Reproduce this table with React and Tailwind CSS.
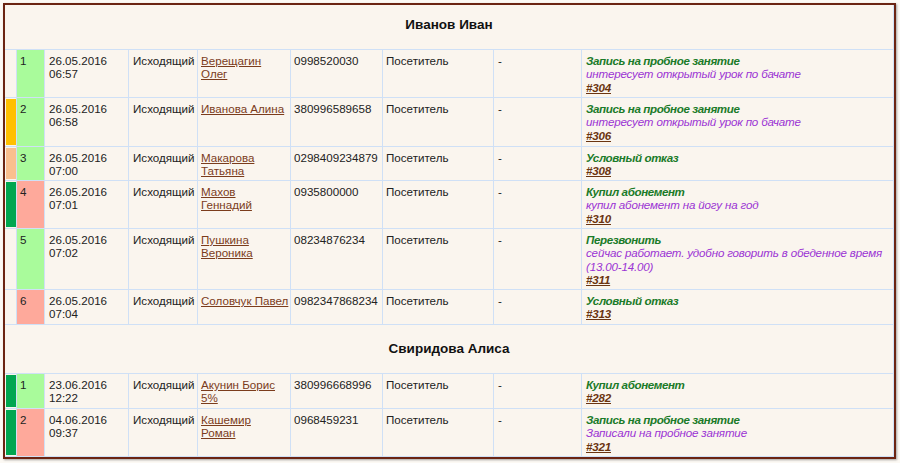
import React from "react";

const G = "bg-[#a9fb9b]";
const R = "bg-[#fea99b]";

const group1 = [
  { n: 1, numBg: G, stripe: "", date: "26.05.2016", time: "06:57", name: ["Верещагин", "Олег"], phone: "0998520030", title: "Запись на пробное занятие", comment: ["интересует открытый урок по бачате"], id: "#304", h: "h-[48px]" },
  { n: 2, numBg: G, stripe: "bg-[#ffc000]", date: "26.05.2016", time: "06:58", name: ["Иванова Алина"], phone: "380996589658", title: "Запись на пробное занятие", comment: ["интересует открытый урок по бачате"], id: "#306", h: "h-[49px]" },
  { n: 3, numBg: G, stripe: "bg-[#f9bf8e]", date: "26.05.2016", time: "07:00", name: ["Макарова", "Татьяна"], phone: "0298409234879", title: "Условный отказ", comment: [], id: "#308", h: "h-[34px]" },
  { n: 4, numBg: R, stripe: "bg-[#00a650]", date: "26.05.2016", time: "07:01", name: ["Махов", "Геннадий"], phone: "0935800000", title: "Купил абонемент", comment: ["купил абонемент на йогу на год"], id: "#310", h: "h-[48px]" },
  { n: 5, numBg: G, stripe: "", date: "26.05.2016", time: "07:02", name: ["Пушкина", "Вероника"], phone: "08234876234", title: "Перезвонить", comment: ["сейчас работает. удобно говорить в обеденное время", "(13.00-14.00)"], id: "#311", h: "h-[61px]" },
  { n: 6, numBg: R, stripe: "", date: "26.05.2016", time: "07:04", name: ["Соловчук Павел"], phone: "0982347868234", title: "Условный отказ", comment: [], id: "#313", h: "h-[35px]" },
];

const group2 = [
  { n: 1, numBg: G, stripe: "bg-[#00a650]", date: "23.06.2016", time: "12:22", name: ["Акунин Борис", "5%"], phone: "380996668996", title: "Купил абонемент", comment: [], id: "#282", h: "h-[35px]" },
  { n: 2, numBg: R, stripe: "bg-[#00a650]", date: "04.06.2016", time: "09:37", name: ["Кашемир", "Роман"], phone: "0968459231", title: "Запись на пробное занятие", comment: ["Записали на пробное занятие"], id: "#321", h: "h-[48px]" },
];

function Row({ r }) {
  return (
    <div className={`grid grid-cols-[11px_28px_84px_69px_93px_92px_111px_88px_312px] border-t border-[#cfe0f6] ${r.h}`}>
      <div className="pl-[1px] py-[1px]">
        <div className={`h-full w-full ${r.stripe}`} />
      </div>
      <div className={`border-l border-[#cfe0f6] pl-[3px] pt-[4px] ${r.numBg}`}>{r.n}</div>
      <div className="border-l border-[#cfe0f6] pl-[4px] pt-[4px]">
        <div>{r.date}</div>
        <div>{r.time}</div>
      </div>
      <div className="border-l border-[#cfe0f6] pl-[4px] pt-[4px]">Исходящий</div>
      <div className="border-l border-[#cfe0f6] pl-[3px] pt-[4px]">
        <a className="text-[#7b3c1c] underline decoration-[#7b3c1c]">
          {r.name.map((l, i) => (
            <React.Fragment key={i}>
              {i > 0 && <br />}
              {l}
            </React.Fragment>
          ))}
        </a>
      </div>
      <div className="border-l border-[#cfe0f6] pl-[3px] pt-[4px]">{r.phone}</div>
      <div className="border-l border-[#cfe0f6] pl-[3px] pt-[4px]">Посетитель</div>
      <div className="border-l border-[#cfe0f6] pl-[4px] pt-[4px]">-</div>
      <div className="border-l border-[#cfe0f6] pl-[4px] pt-[4px] italic">
        <div className="font-bold tracking-[-0.4px] text-[#1b7b29]">{r.title}</div>
        {r.comment.map((c, i) => (
          <div key={i} className="tracking-[-0.18px] text-[#9a33d4]">{c}</div>
        ))}
        <div>
          <a className="font-bold tracking-[-0.2px] text-[#6b3410] underline decoration-[#6b3410]">{r.id}</a>
        </div>
      </div>
    </div>
  );
}

export default function App() {
  return (
    <div className="w-[900px] h-[463px] bg-[#fcf9f4] pt-[3px] pl-[3px] font-['Liberation_Sans',Arial,sans-serif] text-[11.6px] leading-[13.3px] text-[#222]">
      <div className="w-[893px] border-2 border-[#6b2412] bg-[#faf5ee] shadow-[1px_1px_2px_rgba(0,0,0,0.35)]">
        <div className="border-r border-b border-[#cfe0f6]">
          <div className="h-[44px] flex items-center justify-center pb-[4px] font-bold text-[13.5px] text-[#111]">Иванов Иван</div>
          {group1.map((r, i) => (
            <Row key={i} r={r} />
          ))}
          <div className="h-[49px] flex items-center justify-center border-t border-[#cfe0f6] font-bold text-[13.5px] text-[#111]">Свиридова Алиса</div>
          {group2.map((r, i) => (
            <Row key={i} r={r} />
          ))}
        </div>
      </div>
    </div>
  );
}
